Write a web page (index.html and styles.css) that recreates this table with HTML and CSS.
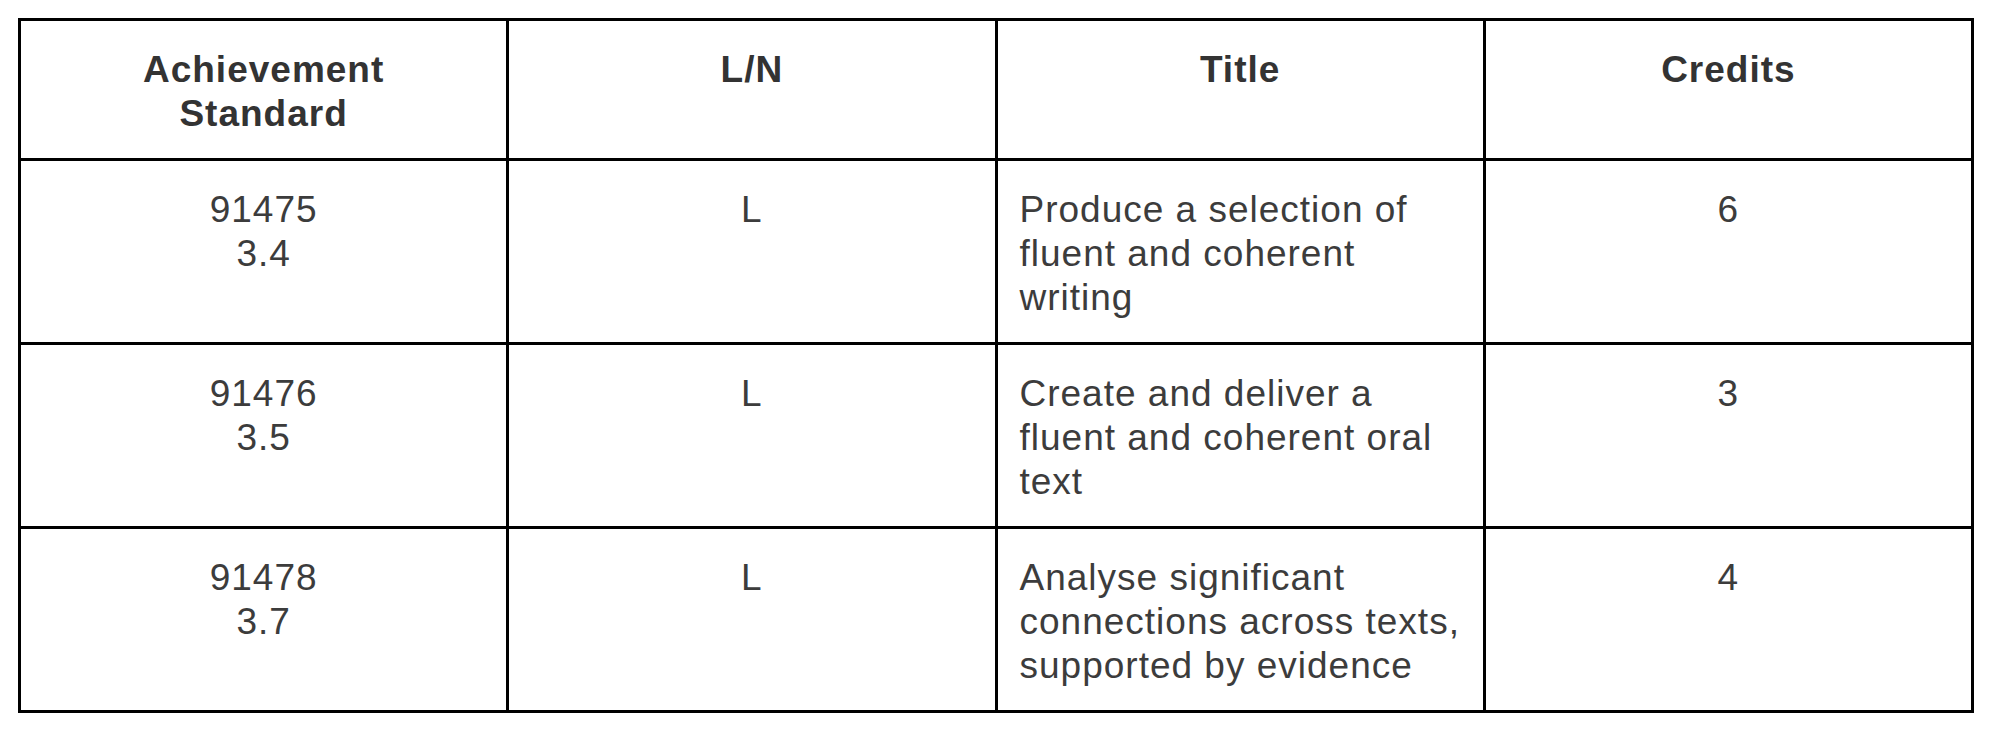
FILE: index.html
```html
<!DOCTYPE html>
<html lang="en">
<head>
<meta charset="utf-8">
<title>Achievement Standards</title>
<link rel="stylesheet" href="styles.css">
</head>
<body>
<table class="standards">
  <colgroup>
    <col class="col"><col class="col"><col class="col"><col class="col">
  </colgroup>
  <thead>
    <tr>
      <th>Achievement<br>Standard</th>
      <th>L/N</th>
      <th>Title</th>
      <th>Credits</th>
    </tr>
  </thead>
  <tbody>
    <tr>
      <td>91475<br>3.4</td>
      <td>L</td>
      <td class="title">Produce a selection of fluent and coherent writing</td>
      <td>6</td>
    </tr>
    <tr>
      <td>91476<br>3.5</td>
      <td>L</td>
      <td class="title">Create and deliver a fluent and coherent oral text</td>
      <td>3</td>
    </tr>
    <tr>
      <td>91478<br>3.7</td>
      <td>L</td>
      <td class="title">Analyse significant connections across texts, supported by evidence</td>
      <td>4</td>
    </tr>
  </tbody>
</table>
</body>
</html>
```

FILE: styles.css
```css
html, body {
  margin: 0;
  padding: 0;
  background: #ffffff;
}

body {
  padding: 18px 0 0 18px;
  font-family: "Liberation Sans", Arial, sans-serif;
}

.standards {
  width: 1956px;
  table-layout: fixed;
  border-collapse: separate;
  border-spacing: 0;
  border-top: 3px solid #000;
  border-left: 3px solid #000;
}

.standards .col {
  width: 25%;
}

.standards th,
.standards td {
  border-right: 3px solid #000;
  border-bottom: 3px solid #000;
  padding: 27px 12px 22px 12px;
  vertical-align: top;
  text-align: center;
  font-size: 37px;
  line-height: 44px;
  letter-spacing: 1px;
}

.standards th {
  font-weight: bold;
  color: #333;
}

.standards td {
  font-weight: normal;
  color: #3c3c3c;
}

.standards td.title {
  text-align: left;
  padding-left: 22px;
  padding-right: 14px;
}
```
